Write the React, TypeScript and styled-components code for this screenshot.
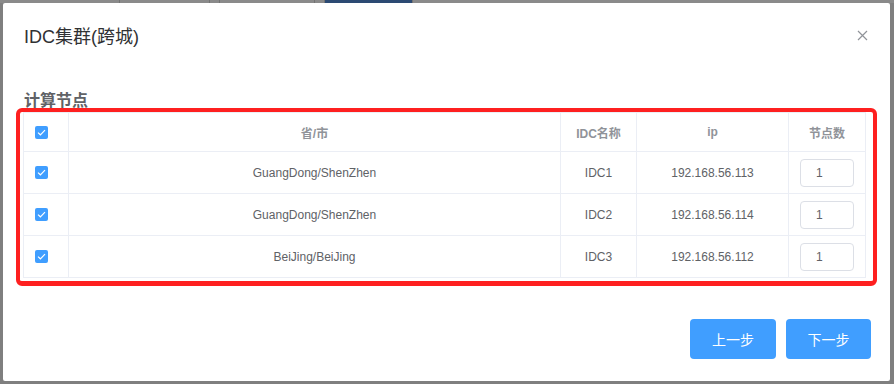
import React from 'react'
import styled, { createGlobalStyle } from 'styled-components'

const GlobalStyle = createGlobalStyle`
  html, body {
    margin: 0;
    padding: 0;
    width: 894px;
    height: 384px;
    overflow: hidden;
    background: #7f7f7f;
    font-family: "Liberation Sans", "Noto Sans CJK SC", Arial, sans-serif;
  }
`

const Page = styled.div`
  position: relative;
  width: 894px;
  height: 384px;
  background: #7f7f7f;
`

// the page behind the modal overlay, only its top edge is visible
const BehindBar = styled.div`
  display: grid;
  grid-template-columns: 120px 90px 10px 95px 10px 88px 1fr;
  height: 3px;
  background: #8a8a8a;
`

const BehindCell = styled.div<{ $blue?: boolean }>`
  border-right: 1px solid #737373;
  background: ${p => (p.$blue ? '#2c4a73' : 'transparent')};
`

const Dialog = styled.div`
  position: absolute;
  left: 3px;
  top: 3px;
  width: 887px;
  height: 378px;
  box-sizing: border-box;
  background: #fff;
  border-radius: 2px;
  display: flex;
  flex-direction: column;
`

const Header = styled.div`
  display: flex;
  align-items: flex-start;
  justify-content: space-between;
  padding: 22px 22px 10px 21px;
`

const Title = styled.span`
  font-size: 18px;
  line-height: 24px;
  color: #303133;
`

const CloseButton = styled.button`
  border: 0;
  background: none;
  padding: 0;
  margin-top: 5px;
  width: 11px;
  height: 11px;
  display: flex;
  cursor: pointer;
`

const Body = styled.div`
  padding: 34px 13px 0 13px;
`

const SectionTitle = styled.div`
  font-size: 16px;
  line-height: 16px;
  font-weight: 700;
  color: #606266;
  padding-left: 8px;
  margin-bottom: -1px;
`

const Highlight = styled.div`
  border: 4px solid #fe2020;
  border-bottom-width: 5px;
  border-radius: 6px;
  padding: 0 7px 3px 3px;
`

const Table = styled.div`
  border-top: 1px solid #ebeef5;
  border-left: 1px solid #ebeef5;
`

const Row = styled.div<{ $head?: boolean }>`
  display: grid;
  grid-template-columns: 45px 492px 76px 152px 77px;
  height: ${p => (p.$head ? '38px' : '41px')};
  border-bottom: 1px solid #ebeef5;
`

const Cell = styled.div<{ $head?: boolean; $left?: boolean }>`
  display: flex;
  align-items: center;
  justify-content: ${p => (p.$left ? 'flex-start' : 'center')};
  padding-left: ${p => (p.$left ? '11px' : '0')};
  border-right: 1px solid #ebeef5;
  font-size: 12px;
  font-weight: ${p => (p.$head ? 700 : 400)};
  color: ${p => (p.$head ? '#909399' : '#606266')};
  white-space: nowrap;
`

const Box = styled.span`
  width: 13px;
  height: 13px;
  border-radius: 2px;
  background: #409eff;
  display: flex;
  align-items: center;
  justify-content: center;
`

const CountInput = styled.input`
  width: 54px;
  height: 28px;
  box-sizing: border-box;
  border: 1px solid #dcdfe6;
  border-radius: 4px;
  padding: 0 0 0 15px;
  font-size: 12px;
  font-family: inherit;
  color: #606266;
  outline: none;
`

const Footer = styled.div`
  margin-top: auto;
  display: flex;
  justify-content: flex-end;
  gap: 10px;
  padding: 0 19px 22px 0;
`

const Button = styled.button<{ $w: number }>`
  width: ${p => p.$w}px;
  height: 40px;
  border: 0;
  border-radius: 4px;
  background: #409eff;
  color: #fff;
  font-size: 14px;
  font-family: inherit;
  cursor: pointer;
`

const Checkbox = () => (
  <Box>
    <svg width="9" height="7" viewBox="0 0 9 7">
      <polyline points="1,3.6 3.4,5.8 8,1.2" fill="none" stroke="#fff" strokeWidth="1.2" />
    </svg>
  </Box>
)

const rows = [
  { area: 'GuangDong/ShenZhen', idc: 'IDC1', ip: '192.168.56.113' },
  { area: 'GuangDong/ShenZhen', idc: 'IDC2', ip: '192.168.56.114' },
  { area: 'BeiJing/BeiJing', idc: 'IDC3', ip: '192.168.56.112' }
]

export default function App() {
  return (
    <Page>
      <GlobalStyle />
      <BehindBar>
        <BehindCell />
        <BehindCell />
        <BehindCell />
        <BehindCell />
        <BehindCell />
        <BehindCell $blue />
        <div />
      </BehindBar>
      <Dialog>
        <Header>
          <Title>IDC集群(跨城)</Title>
          <CloseButton aria-label="close">
            <svg width="11" height="11" viewBox="0 0 11 11">
              <path d="M1 1 L10 10 M10 1 L1 10" stroke="#909399" strokeWidth="1.2" />
            </svg>
          </CloseButton>
        </Header>
        <Body>
          <SectionTitle>计算节点</SectionTitle>
          <Highlight>
            <Table>
              <Row $head>
                <Cell $head $left>
                  <Checkbox />
                </Cell>
                <Cell $head>省/市</Cell>
                <Cell $head>IDC名称</Cell>
                <Cell $head>ip</Cell>
                <Cell $head>节点数</Cell>
              </Row>
              {rows.map(r => (
                <Row key={r.idc}>
                  <Cell $left>
                    <Checkbox />
                  </Cell>
                  <Cell>{r.area}</Cell>
                  <Cell>{r.idc}</Cell>
                  <Cell>{r.ip}</Cell>
                  <Cell>
                    <CountInput defaultValue="1" />
                  </Cell>
                </Row>
              ))}
            </Table>
          </Highlight>
        </Body>
        <Footer>
          <Button $w={86}>上一步</Button>
          <Button $w={85}>下一步</Button>
        </Footer>
      </Dialog>
    </Page>
  )
}
